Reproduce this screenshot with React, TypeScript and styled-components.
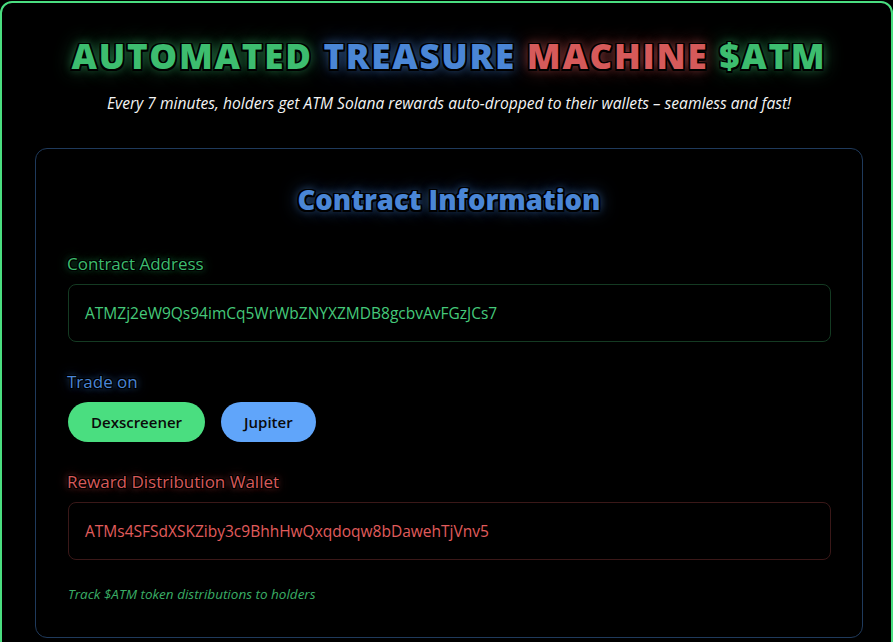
import styled, { createGlobalStyle } from "styled-components";

const GlobalStyle = createGlobalStyle`
  html, body {
    margin: 0;
    padding: 0;
    background: #000;
  }
  body {
    font-family: "Open Sans", "Noto Sans", "Liberation Sans", sans-serif;
    color: #fff;
  }
  * {
    box-sizing: border-box;
  }
`;

const colors = {
  green: "#3dbd6f",
  blue: "#4a86d6",
  red: "#d65a5a",
};

type Tone = keyof typeof colors;

const glow = {
  green: "rgba(61, 189, 111, 0.55)",
  blue: "rgba(74, 134, 214, 0.6)",
  red: "rgba(214, 90, 90, 0.55)",
};

// black outline drawn with shadows, then a coloured glow
const outline = (w: number, c: string, blur: number) => `
  ${-w}px ${-w}px 0 #000, ${w}px ${-w}px 0 #000,
  ${-w}px ${w}px 0 #000, ${w}px ${w}px 0 #000,
  0 ${-w}px 0 #000, 0 ${w}px 0 #000,
  ${-w}px 0 0 #000, ${w}px 0 0 #000,
  0 0 ${blur}px ${c}, 0 0 ${blur * 2}px ${c}
`;

const Frame = styled.div`
  min-height: calc(100vh + 20px);
  margin-top: 1px;
  border: 2px solid #4ade80;
  border-radius: 12px;
  padding: 30px 28px 40px 33px;
  background: #000;
`;

const Header = styled.header`
  text-align: center;
`;

const Title = styled.h1`
  margin: 0;
  font-size: 35px;
  line-height: 46px;
  font-weight: 800;
  letter-spacing: 1.75px;
`;

const Word = styled.span<{ $tone: Tone }>`
  color: ${(p) => colors[p.$tone]};
  text-shadow: ${(p) => outline(1.5, glow[p.$tone], 10)};
`;

const Tagline = styled.p`
  margin: 13px 0 0;
  font-size: 15.6px;
  font-style: italic;
  color: #f4f4f4;
`;

const Card = styled.section`
  margin-top: 34px;
  border: 1px solid #1f3a5c;
  border-radius: 12px;
  padding: 27px 31px 34px 31px;
  background: #000;
`;

const CardTitle = styled.h2`
  margin: 0 0 28px;
  text-align: center;
  font-size: 27.5px;
  line-height: 48px;
  font-weight: 800;
  color: ${colors.blue};
  text-shadow: ${outline(1.5, glow.blue, 9)};
`;

const Label = styled.h3<{ $tone: Tone }>`
  margin: 0 0 8px;
  font-size: 17px;
  line-height: 24px;
  font-weight: 400;
  color: ${(p) => colors[p.$tone]};
  text-shadow: ${(p) => outline(1, glow[p.$tone], 6)};
`;

const Field = styled.div<{ $tone: Tone }>`
  margin-left: 1px;
  height: 58px;
  display: flex;
  align-items: center;
  padding: 0 16px;
  border: 1px solid
    ${(p) => (p.$tone === "green" ? "#143a22" : "#3a1818")};
  border-radius: 8px;
  font-size: 15.5px;
  color: ${(p) => (p.$tone === "green" ? "#45c97a" : "#e05c5c")};
  margin-bottom: 28px;
`;

const Buttons = styled.div`
  display: flex;
  gap: 16px;
  margin: 0 0 28px 1px;
`;

const Pill = styled.a<{ $bg: string }>`
  display: inline-flex;
  align-items: center;
  justify-content: center;
  height: 40px;
  padding: 0 23px;
  border-radius: 999px;
  background: ${(p) => p.$bg};
  color: #0a0a0a;
  font-size: 15px;
  font-weight: 600;
  text-decoration: none;
`;

const Note = styled.p`
  margin: -3px 0 0 1px;
  font-size: 13.5px;
  font-style: italic;
  color: #3aae66;
`;

export default function App() {
  return (
    <>
      <GlobalStyle />
      <Frame>
        <Header>
          <Title>
            <Word $tone="green">AUTOMATED</Word>{" "}
            <Word $tone="blue">TREASURE</Word>{" "}
            <Word $tone="red">MACHINE</Word>{" "}
            <Word $tone="green">$ATM</Word>
          </Title>
          <Tagline>
            Every 7 minutes, holders get ATM Solana rewards auto-dropped to their wallets – seamless and fast!
          </Tagline>
        </Header>
        <Card>
          <CardTitle>Contract Information</CardTitle>

          <Label $tone="green">Contract Address</Label>
          <Field $tone="green">ATMZj2eW9Qs94imCq5WrWbZNYXZMDB8gcbvAvFGzJCs7</Field>

          <Label $tone="blue">Trade on</Label>
          <Buttons>
            <Pill $bg="#4ade80" href="#">Dexscreener</Pill>
            <Pill $bg="#60a5fa" href="#">Jupiter</Pill>
          </Buttons>

          <Label $tone="red">Reward Distribution Wallet</Label>
          <Field $tone="red">ATMs4SFSdXSKZiby3c9BhhHwQxqdoqw8bDawehTjVnv5</Field>

          <Note>Track $ATM token distributions to holders</Note>
        </Card>
      </Frame>
    </>
  );
}
